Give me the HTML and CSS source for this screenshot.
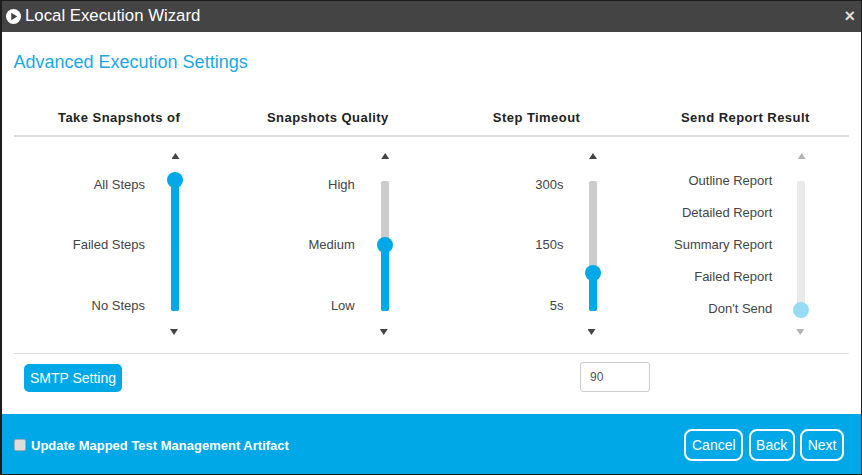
FILE: index.html
```html
<!DOCTYPE html>
<html lang="en">
<head>
<meta charset="utf-8">
<title>Local Execution Wizard</title>
<link rel="stylesheet" href="styles.css">
</head>
<body>
<div class="dialog">
  <header class="titlebar">
    <svg class="play" viewBox="0 0 16 16" width="15" height="15"><circle cx="8" cy="8" r="8" fill="#fff"/><path d="M5.6 3.9 12 8 5.6 12.1Z" fill="#444"/></svg>
    <span class="title">Local Execution Wizard</span>
    <span class="close">×</span>
  </header>
  <main class="content">
    <h1 class="heading">Advanced Execution Settings</h1>
    <div class="grid heads">
      <div class="head">Take Snapshots of</div>
      <div class="head">Snapshots Quality</div>
      <div class="head">Step Timeout</div>
      <div class="head">Send Report Result</div>
    </div>
    <div class="grid sliders">
      <div class="setting">
        <div class="labels three tight"><span>All Steps</span><span>Failed Steps</span><span>No Steps</span></div>
        <div class="slider nudged">
          <i class="arrow up"></i>
          <div class="track"><div class="fill" style="height:100%"></div><div class="thumb" style="top:-9px"></div></div>
          <i class="arrow down"></i>
        </div>
      </div>
      <div class="setting">
        <div class="labels three"><span>High</span><span>Medium</span><span>Low</span></div>
        <div class="slider nudged">
          <i class="arrow up"></i>
          <div class="track"><div class="fill" style="height:50%"></div><div class="thumb" style="top:56px"></div></div>
          <i class="arrow down"></i>
        </div>
      </div>
      <div class="setting">
        <div class="labels three"><span>300s</span><span>150s</span><span>5s</span></div>
        <div class="slider">
          <i class="arrow up"></i>
          <div class="track"><div class="fill" style="height:29%"></div><div class="thumb" style="top:84px"></div></div>
          <i class="arrow down"></i>
        </div>
      </div>
      <div class="setting">
        <div class="labels five"><span>Outline Report</span><span>Detailed Report</span><span>Summary Report</span><span>Failed Report</span><span>Don't Send</span></div>
        <div class="slider disabled">
          <i class="arrow up"></i>
          <div class="track"><div class="thumb" style="top:121px"></div></div>
          <i class="arrow down"></i>
        </div>
      </div>
    </div>
    <div class="grid actions">
      <div class="cell"><button class="smtp" type="button">SMTP Setting</button></div>
      <div class="cell"></div>
      <div class="cell"><input class="timeout" type="text" value="90"></div>
    </div>
  </main>
  <footer class="footer">
    <label class="check"><span class="box"></span>Update Mapped Test Management Artifact</label>
    <div class="buttons">
      <button class="ghost" type="button">Cancel</button>
      <button class="ghost" type="button">Back</button>
      <button class="ghost" type="button">Next</button>
    </div>
  </footer>
</div>
</body>
</html>
```
FILE: styles.css
```css
* { box-sizing: border-box; }
html, body { margin: 0; padding: 0; }
body { font-family: "Liberation Sans", Arial, sans-serif; color: #333; background: #fff; }
.dialog { width: 862px; height: 475px; display: flex; flex-direction: column; border: 1px solid #1c1c1c; border-left-width: 2px; border-right-width: 1px; overflow: hidden; }
.titlebar { height: 31px; flex: none; background: #444; color: #fff; display: flex; align-items: center; padding: 0 6px 1px 4px; }
.play { flex: none; margin-right: 4px; }
.title { font-size: 16.8px; flex: 1; }
.close { font-size: 18px; font-weight: bold; color: #ddd; line-height: 1; }
.content { flex: 1; padding: 20px 12px 0; display: flex; flex-direction: column; }
.heading { margin: 0 0 0 -0.5px; font-size: 18px; font-weight: normal; line-height: 20px; color: #1ca7e4; }
.grid { display: grid; grid-template-columns: repeat(4, minmax(0, 1fr)); }
.heads { margin-top: 25px; height: 40px; border-bottom: 2px solid #ddd; padding-top: 10.5px; }
.head { font-size: 13px; font-weight: bold; letter-spacing: .45px; line-height: 20px; text-align: center; color: #222; padding-left: 1.5px; }
.sliders { height: 217px; padding-top: 15px; border-bottom: 1px solid #ddd; }
.setting { display: flex; }
.labels { width: 132px; display: flex; flex-direction: column; align-items: flex-end; font-size: 13px; line-height: 16px; color: #444; }
.labels.tight { width: 131px; }
.labels.three { padding-top: 25px; gap: 44.3px; }
.labels.five { padding-top: 21px; gap: 16.1px; }
.slider { width: 8px; margin-left: 25px; display: flex; flex-direction: column; align-items: center; }
.slider.nudged { margin-left: 26px; }
.arrow { display: block; flex: none; width: 8px; height: 6px; background: #444; }
.arrow.up { clip-path: polygon(50% 0, 100% 100%, 0 100%); margin: 1px -.5px 22px .5px; }
.arrow.down { clip-path: polygon(0 0, 100% 0, 50% 100%); margin: 18px 1px 0 -1px; }
.track { position: relative; width: 8px; height: 130px; background: #ccc; border-radius: 2px; display: flex; align-items: flex-end; flex: none; }
.fill { width: 100%; background: #00a8e8; border-radius: 2px; }
.thumb { position: absolute; left: -4px; width: 16px; height: 16px; border-radius: 50%; background: #00a8e8; }
.disabled { opacity: .4; }
.actions { height: 60px; align-items: start; }
.cell { padding-top: 8px; }
.smtp { margin: 2px 0 0 10px; width: 98px; height: 28px; padding: 0; border: 0; border-radius: 5px; background: #00a8e8; color: #fff; font: 14px "Liberation Sans", Arial, sans-serif; }
.timeout { width: 70px; height: 30px; margin-left: 148.5px; padding: 0 9px; border: 1px solid #ccc; border-radius: 3px; font: 12px "Liberation Sans", Arial, sans-serif; color: #555; }
.footer { flex: 1; background: #00a8e8; display: flex; align-items: center; justify-content: space-between; padding: 2px 17px 0 12px; }
.check { display: flex; align-items: center; font-size: 13px; font-weight: bold; color: #fff; }
.box { width: 12px; height: 12px; margin-right: 5px; background: #ddd; border: 1px solid #aaa; border-radius: 2px; }
.buttons { display: flex; gap: 5.5px; }
.ghost { height: 32px; padding: 0 5.5px; background: transparent; border: 2px solid #fff; border-radius: 8px; color: #fff; font: 14px "Liberation Sans", Arial, sans-serif; }
```
